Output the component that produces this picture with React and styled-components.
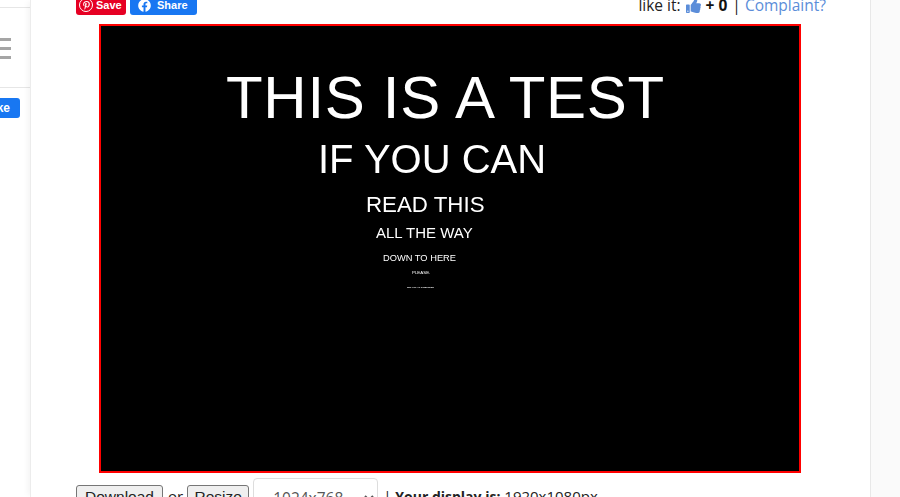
import React from "react";
import styled, { createGlobalStyle } from "styled-components";
import { FaPinterestP, FaFacebook, FaThumbsUp } from "react-icons/fa";

const Global = createGlobalStyle`
  html, body {
    margin: 0;
    padding: 0;
    height: 100%;
    overflow: hidden;
    background: #fafafa;
  }
  body {
    font-family: "Open Sans", "Liberation Sans", sans-serif;
    color: #222;
  }
`;

const Page = styled.div`
  display: flex;
  width: 900px;
  height: 497px;
  overflow: hidden;
`;

const Sidebar = styled.div`
  width: 30px;
  flex: none;
  background: #fff;
  overflow: hidden;
  display: flex;
  flex-direction: column;
  align-items: flex-end;
`;

const SideRule = styled.div`
  width: 100%;
  height: 1px;
  flex: none;
  margin-top: ${({ $top }) => $top}px;
  background: #e6e6e6;
`;

const Burger = styled.div`
  align-self: flex-start;
  width: 11px;
  margin-top: 30px;
  display: flex;
  flex-direction: column;
  gap: 6px;
  span {
    height: 3px;
    background: #a5a5a5;
  }
`;

const LikeButton = styled.div`
  margin: 10px 10px 0 0;
  width: 60px;
  height: 20px;
  flex: none;
  background: #1877f2;
  border-radius: 3px;
  color: #fff;
  font: bold 12px/20px "Liberation Sans", sans-serif;
  text-align: right;
  padding-right: 10px;
  box-sizing: border-box;
`;

const Main = styled.div`
  width: 841px;
  flex: none;
  box-sizing: border-box;
  background: #fff;
  border-left: 1px solid #ececec;
  border-right: 1px solid #e8e8e8;
  box-shadow: -4px 0 6px -2px rgba(0, 0, 0, 0.05);
  padding: 0 44px 0 45px;
`;

const TopBar = styled.div`
  display: flex;
  justify-content: space-between;
  align-items: flex-start;
  height: 15px;
`;

const ShareGroup = styled.div`
  display: flex;
  gap: 4px;
`;

const ShareButton = styled.div`
  display: flex;
  align-items: center;
  box-sizing: border-box;
  width: ${({ $w }) => $w}px;
  height: 20px;
  margin-top: -5px;
  padding-left: ${({ $pad }) => $pad}px;
  gap: ${({ $gap }) => $gap}px;
  background: ${({ $bg }) => $bg};
  border-radius: 3px;
  color: #fff;
  font: bold 11px "Liberation Sans", sans-serif;
`;

const PinBadge = styled.span`
  width: 14px;
  height: 14px;
  box-sizing: border-box;
  flex: none;
  border: 1px solid #fff;
  border-radius: 50%;
  display: flex;
  align-items: center;
  justify-content: center;
`;

const Rating = styled.div`
  display: flex;
  align-items: center;
  gap: 5px;
  height: 24px;
  margin-top: -7px;
  font-size: 15.5px;
  white-space: nowrap;
  color: #222;
  b {
    font-weight: 700;
    color: #111;
  }
  a {
    color: #5b8dd9;
  }
`;

const Frame = styled.div`
  width: 702px;
  height: 449px;
  box-sizing: border-box;
  margin: 9px 0 0 23px;
  background: #000;
  border: 2px solid #f00;
  padding-top: 42px;
  display: flex;
  flex-direction: column;
  font-family: "Liberation Sans", sans-serif;
  color: #fff;
  overflow: hidden;
`;

const Line = styled.div`
  flex: none;
  font-size: ${({ $size }) => $size}px;
  line-height: ${({ $lh }) => $lh}px;
  margin-top: ${({ $gap }) => $gap}px;
  margin-left: ${({ $left }) => $left}px;
  letter-spacing: ${({ $track }) => $track || 0}px;
  font-weight: ${({ $bold }) => ($bold ? 700 : 400)};
  white-space: nowrap;
  filter: blur(0.3px);
`;

const Controls = styled.div`
  display: flex;
  align-items: flex-start;
  margin-top: 5px;
  font-size: 15px;
  white-space: nowrap;
  b {
    font-size: 14px;
    font-weight: 700;
  }
`;

const NativeButton = styled.button`
  width: ${({ $w }) => $w}px;
  margin-top: 7px;
  height: 24px;
  padding: 1px 0;
  box-sizing: border-box;
  background: #efefef;
  border: 1px solid #767676;
  border-radius: 3px;
  color: #222;
  font: 15.5px "Liberation Sans", sans-serif;
`;

const Word = styled.span`
  margin: 8px ${({ $r }) => $r}px 0 ${({ $l }) => $l}px;
  line-height: 20px;
  color: #222;
`;

const SizeSelect = styled.select`
  width: 125px;
  height: 40px;
  margin-left: 4px;
  box-sizing: border-box;
  padding-left: 15px;
  background: #fff;
  border: 1px solid #ddd;
  border-radius: 4px;
  color: #555;
  font: 15.5px "Open Sans", sans-serif;
`;

export default function App() {
  return (
    <Page>
      <Global />
      <Sidebar>
        <SideRule $top={7} />
        <Burger>
          <span />
          <span />
          <span />
        </Burger>
        <SideRule $top={28} />
        <LikeButton>Like</LikeButton>
      </Sidebar>
      <Main>
        <TopBar>
          <ShareGroup>
            <ShareButton $w={50} $pad={3} $gap={3} $bg="#e60023">
              <PinBadge>
                <FaPinterestP size={9} />
              </PinBadge>
              Save
            </ShareButton>
            <ShareButton $w={67} $pad={8} $gap={6} $bg="#1877f2">
              <FaFacebook size={13} />
              Share
            </ShareButton>
          </ShareGroup>
          <Rating>
            <span>like it:</span>
            <FaThumbsUp size={15} color="#5b8dd9" />
            <b>+ 0</b>
            <span>
              | <a>Complaint?</a>
            </span>
          </Rating>
        </TopBar>
        <Frame>
          <Line $size={60} $lh={60} $gap={0} $left={125} $track={0.7}>THIS IS A TEST</Line>
          <Line $size={40} $lh={40} $gap={11} $left={217}>IF YOU CAN</Line>
          <Line $size={22.3} $lh={26} $gap={13} $left={265}>READ THIS</Line>
          <Line $size={15} $lh={18} $gap={6} $left={275}>ALL THE WAY</Line>
          <Line $size={9.3} $lh={12} $gap={10} $left={282}>DOWN TO HERE</Line>
          <Line $size={4.4} $lh={6} $gap={6} $left={311}>PLEASE.</Line>
          <Line $size={2.3} $lh={4} $gap={9} $left={306} $bold>SET OFF AT COMPUTER</Line>
        </Frame>
        <Controls>
          <NativeButton $w={87}>Download</NativeButton>
          <Word $l={5} $r={4}>or</Word>
          <NativeButton $w={62}>Resize</NativeButton>
          <SizeSelect defaultValue="1024x768">
            <option>1024x768</option>
          </SizeSelect>
          <Word $l={5} $r={0}>| <b>Your display is:</b> 1920x1080px</Word>
        </Controls>
      </Main>
    </Page>
  );
}
